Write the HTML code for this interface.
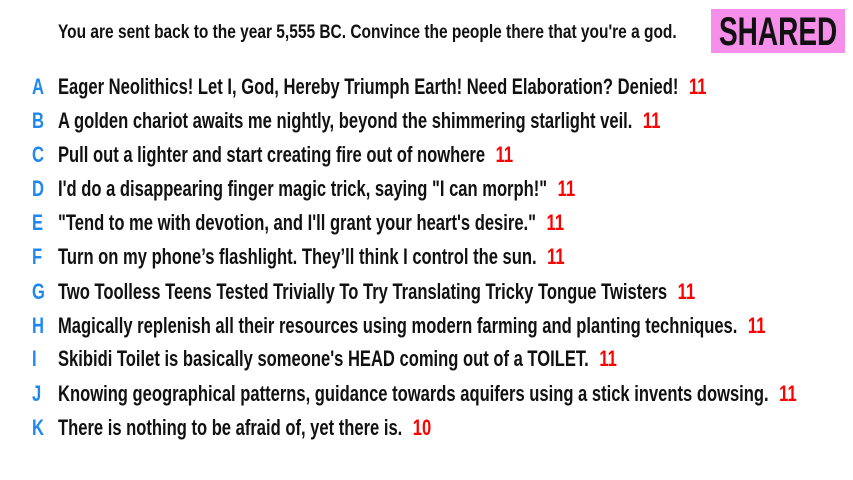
<!DOCTYPE html>
<html><head><meta charset="utf-8"><style>
html,body{margin:0;padding:0;background:#fff;width:853px;height:480px;overflow:hidden;font-family:"Liberation Sans",sans-serif;}
.t{position:absolute;left:58px;top:22px;font-size:19px;font-weight:bold;color:#111;white-space:nowrap;transform:scaleX(0.815);transform-origin:left top;}
.box{position:absolute;left:711px;top:9px;width:134px;height:44px;background:#f58fea;}
.box span{position:absolute;left:8px;top:1px;font-size:40px;font-weight:bold;color:#111;transform:scaleX(0.70);transform-origin:left top;white-space:nowrap;}
.r{position:absolute;left:0;height:34px;white-space:nowrap;}
.l{position:absolute;left:32px;top:0;font-size:22px;font-weight:bold;color:#1e88f0;transform:scaleX(0.753);transform-origin:left top;}
.x{position:absolute;left:58px;top:0;font-size:22px;font-weight:bold;color:#111;transform:scaleX(0.753);transform-origin:left top;}
.n{color:#f00;margin-left:14px;}
</style></head><body>
<div class="t">You are sent back to the year 5,555 BC. Convince the people there that you're a god.</div>
<div class="box"><span>SHARED</span></div>
<div class="r" style="top:74px"><span class="l">A</span><span class="x">Eager Neolithics! Let I, God, Hereby Triumph Earth! Need Elaboration? Denied!<span class="n">11</span></span></div>
<div class="r" style="top:108px"><span class="l">B</span><span class="x">A golden chariot awaits me nightly, beyond the shimmering starlight veil.<span class="n">11</span></span></div>
<div class="r" style="top:142px"><span class="l">C</span><span class="x">Pull out a lighter and start creating fire out of nowhere<span class="n">11</span></span></div>
<div class="r" style="top:176px"><span class="l">D</span><span class="x">I'd do a disappearing finger magic trick, saying "I can morph!"<span class="n">11</span></span></div>
<div class="r" style="top:210px"><span class="l">E</span><span class="x">"Tend to me with devotion, and I'll grant your heart's desire."<span class="n">11</span></span></div>
<div class="r" style="top:244px"><span class="l">F</span><span class="x">Turn on my phone’s flashlight. They’ll think I control the sun.<span class="n">11</span></span></div>
<div class="r" style="top:279px"><span class="l">G</span><span class="x">Two Toolless Teens Tested Trivially To Try Translating Tricky Tongue Twisters<span class="n">11</span></span></div>
<div class="r" style="top:313px"><span class="l">H</span><span class="x">Magically replenish all their resources using modern farming and planting techniques.<span class="n">11</span></span></div>
<div class="r" style="top:346px"><span class="l">I</span><span class="x">Skibidi Toilet is basically someone's HEAD coming out of a TOILET.<span class="n">11</span></span></div>
<div class="r" style="top:381px"><span class="l">J</span><span class="x">Knowing geographical patterns, guidance towards aquifers using a stick invents dowsing.<span class="n">11</span></span></div>
<div class="r" style="top:415px"><span class="l">K</span><span class="x">There is nothing to be afraid of, yet there is.<span class="n">10</span></span></div>
</body></html>
